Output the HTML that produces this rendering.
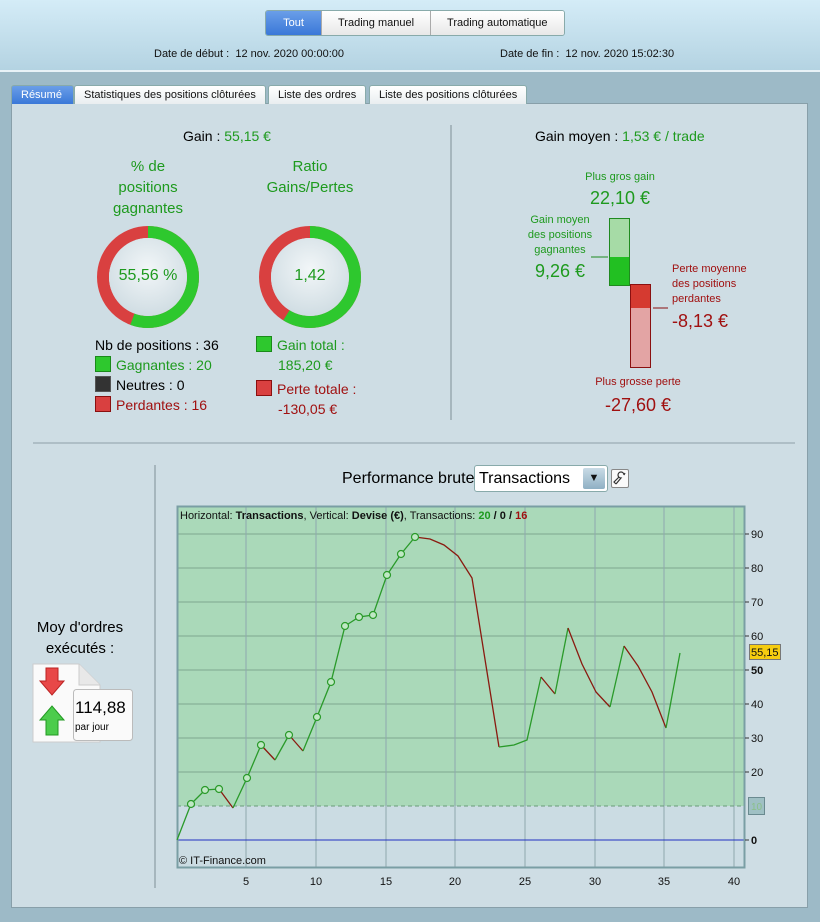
<!DOCTYPE html>
<html><head><meta charset="utf-8"><style>
*{margin:0;padding:0;box-sizing:border-box}
body{width:820px;height:922px;position:relative;overflow:hidden;font-family:"Liberation Sans",sans-serif;background:#9dbac7}
.a{position:absolute}
.hdr{left:0;top:0;width:820px;height:72px;background:linear-gradient(#d4ecf7,#b4d3e2);border-bottom:2px solid #e8f2f7}
.btns{left:265px;top:10px;height:26px;display:flex;border:1px solid #8aa;border-radius:3px;overflow:hidden;font-size:11px}
.btns div{padding:0 16px;line-height:24px;background:linear-gradient(#fff,#e8e8e8);border-left:1px solid #aaa;color:#111}
.btns div:first-child{background:linear-gradient(#6a9ee8,#3a78d8);color:#fff;border-left:none;width:55px;text-align:center;padding:0}
.t11{font-size:11px;color:#111}
.tab{top:85px;height:19px;font-size:11px;line-height:18px;padding:0 9px;background:linear-gradient(#fff,#e9eef0);border:1px solid #8aa;border-bottom:none;border-radius:3px 3px 0 0;color:#111}
.panel{left:11px;top:103px;width:797px;height:805px;background:#cedde4;border:1px solid #889fa9}
.g{color:#1e9a1e}.r{color:#a01010}
.c{text-align:center}
.sq{display:inline-block;width:16px;height:16px;vertical-align:-2px;margin-right:5px;border:1px solid #555}
</style></head><body>
<div class="a hdr"></div>
<div class="a btns"><div>Tout</div><div>Trading manuel</div><div>Trading automatique</div></div>
<div class="a t11" style="left:154px;top:48px">Date de début :&nbsp; 12 nov. 2020 00:00:00</div>
<div class="a t11" style="left:500px;top:48px">Date de fin :&nbsp; 12 nov. 2020 15:02:30</div>
<div class="a panel"></div>
<div class="a tab" style="left:11px;background:linear-gradient(#6a9ee8,#3a78d8);color:#fff;width:63px">Résumé</div>
<div class="a tab" style="left:74px">Statistiques des positions clôturées</div>
<div class="a tab" style="left:268px">Liste des ordres</div>
<div class="a tab" style="left:369px">Liste des positions clôturées</div>

<div class="a" style="left:183px;top:128px;font-size:14px">Gain : <span class="g">55,15 €</span></div>
<div class="a c g" style="left:88px;top:156px;width:120px;font-size:15px;line-height:21px">% de<br>positions<br>gagnantes</div>
<div class="a c g" style="left:250px;top:156px;width:120px;font-size:15px;line-height:21px">Ratio<br>Gains/Pertes</div>
<svg class="a" style="left:0;top:0" width="820" height="922">
<defs><radialGradient id="cg" cx="50%" cy="40%" r="60%"><stop offset="0" stop-color="#f2f6f8"/><stop offset="1" stop-color="#d0dde3"/></radialGradient></defs>
<circle cx="148" cy="277" r="45" fill="none" stroke="#d94040" stroke-width="12"/>
<circle cx="148" cy="277" r="45" fill="none" stroke="#2ec82e" stroke-width="12" stroke-dasharray="157.1 400" transform="rotate(-90 148 277)"/>
<circle cx="148" cy="277" r="39" fill="url(#cg)"/>
<circle cx="310" cy="277" r="45" fill="none" stroke="#d94040" stroke-width="12"/>
<circle cx="310" cy="277" r="45" fill="none" stroke="#2ec82e" stroke-width="12" stroke-dasharray="166 400" transform="rotate(-90 310 277)"/>
<circle cx="310" cy="277" r="39" fill="url(#cg)"/>
<line x1="451" y1="125" x2="451" y2="420" stroke="#7f8f96"/>
<line x1="33" y1="443" x2="795" y2="443" stroke="#8fa0a8"/>
<line x1="155" y1="465" x2="155" y2="888" stroke="#7f8f96"/>
<rect x="609.5" y="218.5" width="20" height="67" fill="#a6dba6" stroke="#1f8a1f"/>
<rect x="610" y="257" width="19" height="28" fill="#22c022"/>
<rect x="630.5" y="284.5" width="20" height="83" fill="#e3a4a4" stroke="#8a1010"/>
<rect x="631" y="285" width="19" height="23" fill="#d53a30"/>
<line x1="591" y1="257" x2="608" y2="257" stroke="#1f8a1f"/>
<line x1="653" y1="308" x2="668" y2="308" stroke="#8a1010"/>
</svg>
<div class="a c g" style="left:88px;top:267px;width:120px;font-size:16px">55,56 %</div>
<div class="a c g" style="left:250px;top:267px;width:120px;font-size:16px">1,42</div>
<div class="a" style="left:95px;top:335px;font-size:14px;line-height:20px">Nb de positions : 36<br><span class="g"><span class="sq" style="background:#2ec82e;border-color:#1a8a1a"></span>Gagnantes : 20</span><br><span class="sq" style="background:#333"></span>Neutres : 0<br><span class="r"><span class="sq" style="background:#d94040;border-color:#8a1010"></span>Perdantes : 16</span></div>
<div class="a" style="left:256px;top:335px;font-size:14px;line-height:20px"><span class="g"><span class="sq" style="background:#2ec82e;border-color:#1a8a1a"></span>Gain total :<br><span style="margin-left:22px">185,20 €</span></span><br><span class="r" style="display:block;margin-top:4px"><span class="sq" style="background:#d94040;border-color:#8a1010"></span>Perte totale :<br><span style="margin-left:22px">-130,05 €</span></span></div>

<div class="a" style="left:535px;top:128px;font-size:14px">Gain moyen : <span class="g">1,53 € / trade</span></div>
<div class="a c g" style="left:570px;top:171px;width:100px;font-size:11px">Plus gros gain</div>
<div class="a c g" style="left:570px;top:188px;width:100px;font-size:18px">22,10 €</div>
<div class="a c g" style="left:515px;top:213px;width:90px;font-size:11px;line-height:15px">Gain moyen<br>des positions<br>gagnantes</div>
<div class="a g" style="left:535px;top:261px;font-size:18px">9,26 €</div>
<div class="a r" style="left:672px;top:262px;font-size:11px;line-height:15px">Perte moyenne<br>des positions<br>perdantes</div>
<div class="a r" style="left:672px;top:311px;font-size:18px">-8,13 €</div>
<div class="a c r" style="left:588px;top:376px;width:100px;font-size:11px">Plus grosse perte</div>
<div class="a c r" style="left:588px;top:395px;width:100px;font-size:18px">-27,60 €</div>

<div class="a c" style="left:20px;top:617px;width:120px;font-size:15px;line-height:21px">Moy d'ordres<br>exécutés :</div>
<svg class="a" style="left:32px;top:663px" width="104" height="82">
<path d="M1 1H47L68 22V79H1Z" fill="#fafafa" stroke="#ccc"/>
<path d="M47 1V22H68" fill="#e8e8e8" stroke="#ccc"/>
<path d="M14 5H26V18H32L20 32L8 18H14Z" fill="#e84848" stroke="#b22"/>
<path d="M14 72H26V57H32L20 43L8 57H14Z" fill="#4ccc4c" stroke="#292"/>
<rect x="41.5" y="26.5" width="59" height="51" rx="3" fill="#fafafa" stroke="#bbb"/>
</svg>
<div class="a" style="left:75px;top:698px;font-size:17px">114,88</div>
<div class="a" style="left:75px;top:722px;font-size:10px">par jour</div>

<div class="a" style="left:342px;top:470px;font-size:16px">Performance brute</div>
<div class="a" style="left:474px;top:465px;width:134px;height:27px;background:#fff;border:1px solid #8aa;border-radius:3px;font-size:16px;line-height:26px;padding-left:4px">Transactions</div>
<div class="a" style="left:583px;top:468px;width:22px;height:21px;background:linear-gradient(#c9dbe6,#8fb0c4);border-radius:2px;color:#111;font-size:11px;text-align:center;line-height:21px">▼</div>
<div class="a" style="left:611px;top:469px;width:18px;height:19px;background:#fafafa;border:1px solid #888;border-radius:2px"></div>
<svg class="a" style="left:612px;top:470px" width="16" height="17"><path d="M4 14L9 8A3 3 0 1 1 12 5L13 3M4 14L2 12L7 7" fill="none" stroke="#333" stroke-width="1.2"/></svg>

<svg class="a" style="left:0;top:0" width="820" height="922" font-family="Liberation Sans, sans-serif">
<rect x="177" y="506" width="567" height="300" fill="#aad9b9"/>
<rect x="177" y="806" width="567" height="61" fill="#cbdce3"/>
<g stroke="#7fa790" stroke-width="1">
<line x1="177" y1="534" x2="744" y2="534"/><line x1="177" y1="568" x2="744" y2="568"/><line x1="177" y1="602" x2="744" y2="602"/><line x1="177" y1="636" x2="744" y2="636"/><line x1="177" y1="670" x2="744" y2="670"/><line x1="177" y1="704" x2="744" y2="704"/><line x1="177" y1="738" x2="744" y2="738"/><line x1="177" y1="772" x2="744" y2="772"/>
</g>
<g stroke="#8fa8ae" stroke-width="1">
<line x1="246" y1="506" x2="246" y2="867"/><line x1="316" y1="506" x2="316" y2="867"/><line x1="386" y1="506" x2="386" y2="867"/><line x1="455" y1="506" x2="455" y2="867"/><line x1="525" y1="506" x2="525" y2="867"/><line x1="595" y1="506" x2="595" y2="867"/><line x1="664" y1="506" x2="664" y2="867"/><line x1="734" y1="506" x2="734" y2="867"/>
</g>
<line x1="177" y1="806" x2="744" y2="806" stroke="#6a9a7a" stroke-dasharray="4 3"/>
<line x1="177" y1="840" x2="744" y2="840" stroke="#2030c0"/>
<rect x="177.5" y="506.5" width="567" height="361" fill="none" stroke="#7a9ea4" stroke-width="2"/>
<g fill="none" stroke-width="1.3">
<polyline stroke="#2a9a2a" points="177,840 191,804 205,790 219,789"/>
<polyline stroke="#8a1a10" points="219,789 233,808"/>
<polyline stroke="#2a9a2a" points="233,808 247,778 261,745"/>
<polyline stroke="#8a1a10" points="261,745 275,760"/>
<polyline stroke="#2a9a2a" points="275,760 289,735"/>
<polyline stroke="#8a1a10" points="289,735 303,751"/>
<polyline stroke="#2a9a2a" points="303,751 317,717 331,682 345,626 359,617 373,615 387,575 401,554 415,537"/>
<polyline stroke="#8a1a10" points="415,537 430,539 444,545 458,556 472,578 499,747"/>
<polyline stroke="#2a9a2a" points="499,747 514,745 527,740 541,677"/>
<polyline stroke="#8a1a10" points="541,677 555,694"/>
<polyline stroke="#2a9a2a" points="555,694 568,628"/>
<polyline stroke="#8a1a10" points="568,628 582,664 596,692 610,707"/>
<polyline stroke="#2a9a2a" points="610,707 624,646"/>
<polyline stroke="#8a1a10" points="624,646 638,666 652,692 666,728"/>
<polyline stroke="#2a9a2a" points="666,728 680,653"/>
</g>
<g fill="#bfe8c4" stroke="#2a9a2a" stroke-width="1.2">
<circle cx="191" cy="804" r="3.5"/><circle cx="205" cy="790" r="3.5"/><circle cx="219" cy="789" r="3.5"/><circle cx="247" cy="778" r="3.5"/><circle cx="261" cy="745" r="3.5"/><circle cx="289" cy="735" r="3.5"/><circle cx="317" cy="717" r="3.5"/><circle cx="331" cy="682" r="3.5"/><circle cx="345" cy="626" r="3.5"/><circle cx="359" cy="617" r="3.5"/><circle cx="373" cy="615" r="3.5"/><circle cx="387" cy="575" r="3.5"/><circle cx="401" cy="554" r="3.5"/><circle cx="415" cy="537" r="3.5"/>
</g>
<text x="180" y="519" font-size="11" fill="#111">Horizontal: <tspan font-weight="bold">Transactions</tspan>, Vertical: <tspan font-weight="bold">Devise (€)</tspan>, Transactions: <tspan font-weight="bold" fill="#1e9a1e">20</tspan><tspan font-weight="bold"> / 0 / </tspan><tspan font-weight="bold" fill="#a01010">16</tspan></text>
<text x="179" y="864" font-size="11" fill="#111">© IT-Finance.com</text>
<g font-size="11" fill="#111" text-anchor="middle">
<text x="246" y="885">5</text><text x="316" y="885">10</text><text x="386" y="885">15</text><text x="455" y="885">20</text><text x="525" y="885">25</text><text x="595" y="885">30</text><text x="664" y="885">35</text><text x="734" y="885">40</text>
</g>
<g stroke="#333"><line x1="745" y1="534" x2="749" y2="534"/><line x1="745" y1="568" x2="749" y2="568"/><line x1="745" y1="602" x2="749" y2="602"/><line x1="745" y1="636" x2="749" y2="636"/><line x1="745" y1="670" x2="749" y2="670"/><line x1="745" y1="704" x2="749" y2="704"/><line x1="745" y1="738" x2="749" y2="738"/><line x1="745" y1="772" x2="749" y2="772"/><line x1="745" y1="840" x2="749" y2="840"/></g>
<g font-size="11" fill="#111">
<text x="751" y="538">90</text><text x="751" y="572">80</text><text x="751" y="606">70</text><text x="751" y="640">60</text><text x="751" y="674" font-weight="bold">50</text><text x="751" y="708">40</text><text x="751" y="742">30</text><text x="751" y="776">20</text><text x="751" y="844" font-weight="bold">0</text>
</g>
<rect x="749.5" y="644.5" width="31" height="15" fill="#f5cc10" stroke="#777"/>
<text x="751" y="656" font-size="11" fill="#111">55,15</text>
<rect x="748.5" y="797.5" width="16" height="17" fill="#9fc0c4" stroke="#6a8a90"/>
<text x="751" y="810" font-size="10" fill="#8ac08a">10</text>
</svg>
</body></html>
